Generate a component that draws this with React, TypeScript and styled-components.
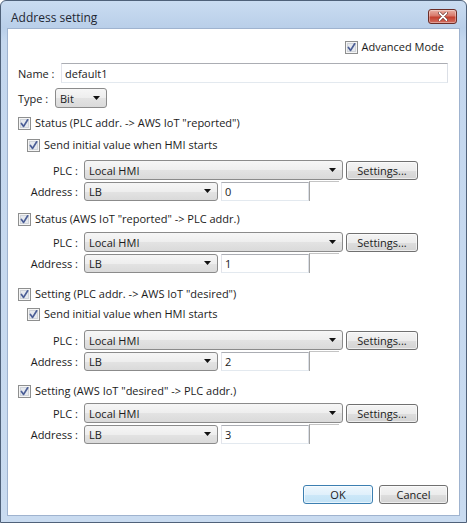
import React from "react";
import styled, { createGlobalStyle } from "styled-components";

const GlobalStyle = createGlobalStyle`
  html, body { margin: 0; padding: 0; background: #ffffff; }
  body {
    font-family: "Open Sans", "Noto Sans", "Liberation Sans", sans-serif;
    font-size: 11px;
    color: #1b1b1b;
  }
  * { box-sizing: border-box; }
`;

const Window = styled.div`
  width: 467px;
  height: 523px;
  display: flex;
  flex-direction: column;
  border: 1px solid #4f6179;
  border-radius: 6px 6px 0 0;
  background: linear-gradient(to bottom, #cadcf1 0px, #b9cfe9 27px, #c4d7ee 40px, #c9dbf0 100%);
  overflow: hidden;
`;

const TitleBar = styled.div`
  height: 27px;
  flex: none;
  display: flex;
  align-items: flex-start;
  justify-content: space-between;
  padding: 0 9px 0 10px;
`;

const TitleText = styled.span`
  margin-top: 9px;
  font-size: 12px;
  line-height: 16px;
  color: #1e2733;
`;

const CloseButton = styled.div`
  margin-top: 8px;
  width: 29px;
  height: 15px;
  border: 1px solid #6b2d27;
  border-radius: 3px;
  background: linear-gradient(to bottom, #e9b0a5 0%, #d8786a 45%, #c4402f 55%, #d36f62 100%);
  display: flex;
  align-items: center;
  justify-content: center;
  box-shadow: inset 0 0 0 1px rgba(255, 255, 255, 0.35);
`;

const Client = styled.div`
  flex: 1;
  margin: 0 6px 6px 6px;
  border: 1px solid #9fb3cf;
  background: #ffffff;
  display: flex;
  flex-direction: column;
`;

const Row = styled.div<{ $mt: number; $h?: number; $indent?: number; $end?: boolean; $pr?: number }>`
  margin-top: ${(p) => p.$mt}px;
  height: ${(p) => p.$h ?? 20}px;
  padding-left: ${(p) => p.$indent ?? 0}px;
  padding-right: ${(p) => p.$pr ?? 0}px;
  display: flex;
  align-items: center;
  justify-content: ${(p) => (p.$end ? "flex-end" : "flex-start")};
  flex: none;
`;

const CheckText = styled.span`
  margin-left: 4px;
  white-space: nowrap;
  line-height: 16px;
`;

const FieldLabel = styled.span<{ $w: number; $right?: boolean }>`
  width: ${(p) => p.$w}px;
  flex: none;
  text-align: ${(p) => (p.$right ? "right" : "left")};
  white-space: nowrap;
  padding-right: ${(p) => (p.$right ? 6 : 0)}px;
`;

const TextBox = styled.div<{ $w: number; $h?: number }>`
  width: ${(p) => p.$w}px;
  height: ${(p) => p.$h ?? 20}px;
  flex: none;
  border: 1px solid;
  border-color: #abadb3 #dbdfe6 #e3e9ef #e2e3ea;
  background: #ffffff;
  padding-left: 3px;
  display: flex;
  align-items: center;
  white-space: nowrap;
`;

const StubBox = styled.div`
  width: 30px;
  height: 20px;
  flex: none;
  border-left: 1px solid #a3a3a3;
  border-top: 1px solid #c4c4c4;
`;

const Combo = styled.div<{ $w: number; $h?: number }>`
  width: ${(p) => p.$w}px;
  height: ${(p) => p.$h ?? 20}px;
  flex: none;
  border: 1px solid #8b8b8b;
  border-radius: 3px;
  background: linear-gradient(to bottom, #f6f6f6 0%, #eeeeee 50%, #e3e3e3 51%, #dadada 100%);
  display: flex;
  align-items: center;
  justify-content: space-between;
  padding: 0 6px 0 4px;
  white-space: nowrap;
`;

const PushButton = styled.div<{ $w: number; $default?: boolean }>`
  width: ${(p) => p.$w}px;
  height: 19px;
  flex: none;
  border: 1px solid ${(p) => (p.$default ? "#3c7fb1" : "#707070")};
  border-radius: 3px;
  background: ${(p) =>
    p.$default
      ? "linear-gradient(to bottom, #eef7fd 0%, #e0f0fb 50%, #cde8f8 51%, #c2e2f6 100%)"
      : "linear-gradient(to bottom, #f4f4f4 0%, #ececec 50%, #dedede 51%, #d3d3d3 100%)"};
  box-shadow: inset 0 0 0 1px rgba(255, 255, 255, 0.6);
  display: flex;
  align-items: center;
  justify-content: center;
  white-space: nowrap;
`;

const Gap = styled.span<{ $w: number }>`
  width: ${(p) => p.$w}px;
  flex: none;
`;

const CheckIcon = () => (
  <svg width="13" height="13" viewBox="0 0 13 13" style={{ flex: "none" }}>
    <rect x="0.5" y="0.5" width="12" height="12" fill="#f5f5f5" stroke="#8e8f8f" />
    <rect x="2.5" y="2.5" width="8" height="8" fill="#e6e9ee" stroke="#d0d4da" />
    <path d="M3.4 6.4 L5.6 9.4 L9.7 2.8" fill="none" stroke="#4b5e96" strokeWidth="1.7" strokeLinecap="round" strokeLinejoin="round" />
  </svg>
);

const Arrow = () => (
  <svg width="7" height="4" viewBox="0 0 7 4" style={{ flex: "none" }}>
    <path d="M0 0 H7 L3.5 4 Z" fill="#111" />
  </svg>
);

const CloseX = () => (
  <svg width="10" height="9" viewBox="0 0 10 9">
    <path d="M1.5 1 L8.5 8 M8.5 1 L1.5 8" stroke="#5a1f1a" strokeWidth="3" strokeLinecap="round" />
    <path d="M1.5 1 L8.5 8 M8.5 1 L1.5 8" stroke="#ffffff" strokeWidth="1.8" strokeLinecap="round" />
  </svg>
);

type Section = {
  title: string;
  send: boolean;
  value: string;
  mtCheck: number;
  mtSend: number;
  mtPlc: number;
};

const sections: Section[] = [
  { title: 'Status (PLC addr. -> AWS IoT "reported")', send: true, value: "0", mtCheck: 7, mtSend: 6, mtPlc: 7 },
  { title: 'Status (AWS IoT "reported" -> PLC addr.)', send: false, value: "1", mtCheck: 10, mtSend: 0, mtPlc: 5 },
  { title: 'Setting (PLC addr. -> AWS IoT "desired")', send: true, value: "2", mtCheck: 13, mtSend: 4, mtPlc: 8 },
  { title: 'Setting (AWS IoT "desired" -> PLC addr.)', send: false, value: "3", mtCheck: 12, mtSend: 0, mtPlc: 4 },
];

const SectionBlock = ({ s }: { s: Section }) => (
  <>
    <Row $mt={s.mtCheck} $h={16} $indent={10}>
      <CheckIcon />
      <CheckText>{s.title}</CheckText>
    </Row>
    {s.send && (
      <Row $mt={s.mtSend} $h={16} $indent={19}>
        <CheckIcon />
        <CheckText>Send initial value when HMI starts</CheckText>
      </Row>
    )}
    <Row $mt={s.mtPlc}>
      <FieldLabel $w={76} $right>PLC :</FieldLabel>
      <Combo $w={259}>
        <span>Local HMI</span>
        <Arrow />
      </Combo>
      <Gap $w={3} />
      <PushButton $w={72}>Settings...</PushButton>
    </Row>
    <Row $mt={1}>
      <FieldLabel $w={76} $right>Address :</FieldLabel>
      <Combo $w={134} $h={19}>
        <span>LB</span>
        <Arrow />
      </Combo>
      <Gap $w={3} />
      <TextBox $w={88} $h={19}>{s.value}</TextBox>
      <StubBox />
    </Row>
  </>
);

export default function App() {
  return (
    <>
      <GlobalStyle />
      <Window>
        <TitleBar>
          <TitleText>Address setting</TitleText>
          <CloseButton>
            <CloseX />
          </CloseButton>
        </TitleBar>
        <Client>
          <Row $mt={10} $h={16} $end $pr={15}>
            <CheckIcon />
            <CheckText>Advanced Mode</CheckText>
          </Row>
          <Row $mt={8} $indent={10}>
            <FieldLabel $w={43}>Name :</FieldLabel>
            <TextBox $w={387}>default1</TextBox>
          </Row>
          <Row $mt={5} $indent={10}>
            <FieldLabel $w={37}>Type :</FieldLabel>
            <Combo $w={52}>
              <span>Bit</span>
              <Arrow />
            </Combo>
          </Row>
          {sections.map((s) => (
            <SectionBlock key={s.value} s={s} />
          ))}
          <Row $mt={41} $h={19} $end $pr={11}>
            <PushButton $w={70} $default>OK</PushButton>
            <Gap $w={6} />
            <PushButton $w={69}>Cancel</PushButton>
          </Row>
        </Client>
      </Window>
    </>
  );
}
